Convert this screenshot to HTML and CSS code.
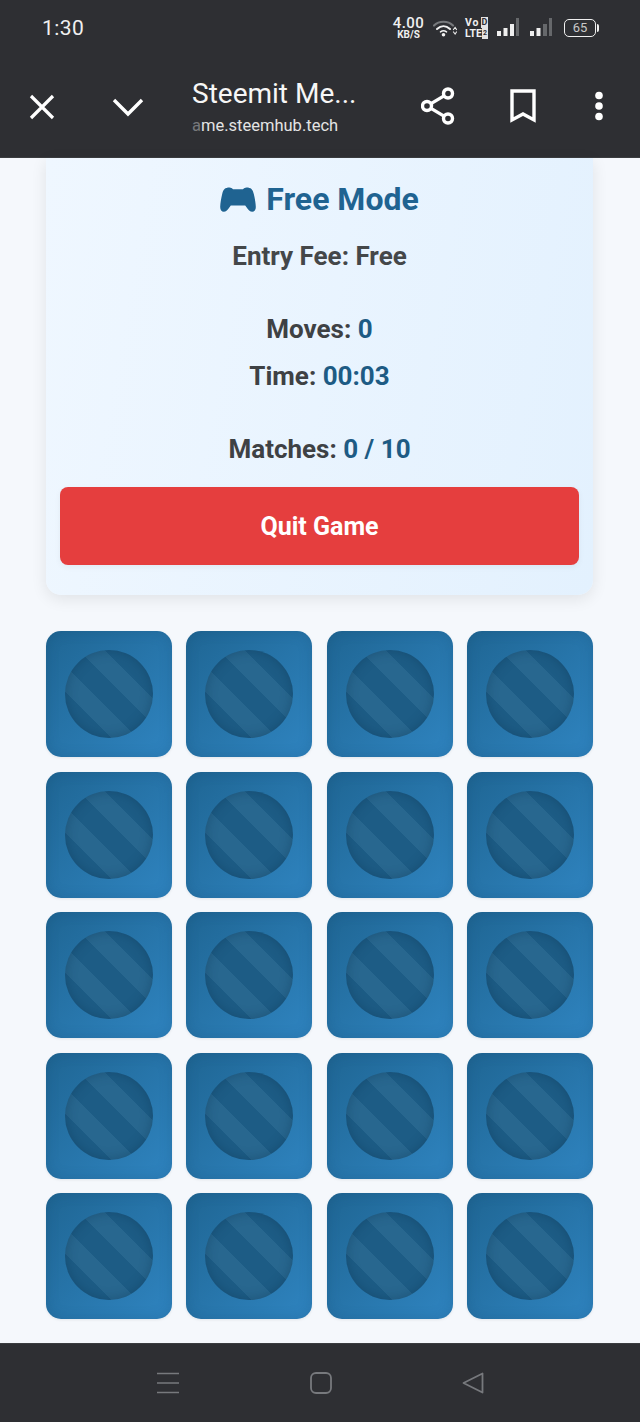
FILE: index.html
```html
<!DOCTYPE html>
<html lang="en">
<head>
<meta charset="utf-8">
<title>Steemit Memory Game</title>
<link rel="stylesheet" href="styles.css">
</head>
<body>
<div class="phone">
  <header class="chrome">
    <div class="status">
      <span class="clock">1:30</span>
      <div class="status-icons">
        <div class="speed"><span class="speed-num">4.00</span><span class="speed-unit">KB/S</span></div>
        <svg class="wifi" width="24" height="17" viewBox="0 0 24 17" fill="none" stroke-linecap="round">
          <path d="M1 5.500C6 0.500 15 0.500 20 5.500" stroke="#77797c" stroke-width="2.200"/>
          <path d="M4 9C8 5.400 13 5.400 17 9" stroke="#f2f2f2" stroke-width="2"/>
          <path d="M7.500 11.800C9.200 10.600 11.800 10.600 13.500 11.800" stroke="#f2f2f2" stroke-width="1.600"/>
          <circle cx="10.500" cy="14.800" r="1.800" fill="#f2f2f2"/>
          <path d="M20.500 9.500l1.600-2 1.400 2M20.500 12l1.600 2 1.400-2" stroke="#e8e8e8" stroke-width="1.200"/>
        </svg>
        <div class="volte">
          <div class="volte-row"><span class="vo">Vo</span><span class="sim-d">D</span></div>
          <div class="volte-row"><span>LTE</span><span class="sim">2</span></div>
        </div>
        <svg class="signal" width="22" height="20" viewBox="0 0 22 20">
          <rect x="0" y="13" width="4" height="5" fill="#efefef"/><rect x="6.500" y="10" width="4" height="8" fill="#efefef"/><rect x="13" y="6" width="4" height="12" fill="#efefef"/><rect x="19" y="0" width="3" height="18" fill="#66686b"/>
        </svg>
        <svg class="signal signal-last" width="22" height="20" viewBox="0 0 22 20">
          <rect x="0" y="13" width="4" height="5" fill="#efefef"/><rect x="6.500" y="10" width="4" height="8" fill="#efefef"/><rect x="13" y="6" width="4" height="12" fill="#66686b"/><rect x="19" y="0" width="3" height="18" fill="#66686b"/>
        </svg>
        <div class="battery"><span class="battery-body">65</span><span class="battery-cap"></span></div>
      </div>
    </div>
    <div class="toolbar">
      <svg class="ico-close" width="26" height="26" viewBox="0 0 26 26" fill="none" stroke="#fff" stroke-width="3.200"><path d="M2 2L24 24M24 2L2 24"/></svg>
      <svg class="ico-chevron" width="32" height="20" viewBox="0 0 32 20" fill="none" stroke="#fff" stroke-width="3.400"><path d="M2 3L16 17L30 3"/></svg>
      <div class="title-block">
        <div class="page-title">Steemit Me...</div>
        <div class="page-url"><span class="url-fade">a</span>me.steemhub.tech</div>
      </div>
      <svg class="ico-share" width="34" height="38" viewBox="0 0 34 38" fill="none" stroke="#fff" stroke-width="3.400"><circle cx="27" cy="6.500" r="4.500"/><circle cx="6" cy="19" r="4.500"/><circle cx="27" cy="31.500" r="4.500"/><path d="M10 16.600L23 8.900M10 21.400L23 29.100"/></svg>
      <svg class="ico-bookmark" width="26" height="34" viewBox="0 0 26 34" fill="none" stroke="#fff" stroke-width="3.400"><path d="M2 2H24V31L13 25L2 31Z"/></svg>
      <svg class="ico-more" width="10" height="30" viewBox="0 0 10 30" fill="#fff"><circle cx="5" cy="4.500" r="3.800"/><circle cx="5" cy="15" r="3.800"/><circle cx="5" cy="25.500" r="3.800"/></svg>
    </div>
  </header>

  <main class="page">
    <section class="panel">
      <h1 class="mode">
        <svg class="pad" width="36" height="25" viewBox="0 0 36 25"><path fill="#1f6391" d="M9.500 0.500C11 0.500 12 1.400 13 2.200H23C24 1.400 25 0.500 26.500 0.500C31 0.500 32.800 2.500 33.800 7C34.800 11.500 35.800 16 35.800 20C35.800 23 34.400 24.700 32.200 24.700C30 24.700 28.800 23.500 27.400 21.500L25.200 18.500H10.800L8.600 21.500C7.200 23.500 6 24.700 3.800 24.700C1.600 24.700 0.200 23 0.200 20C0.200 16 1.200 11.500 2.200 7C3.200 2.500 5 0.500 9.500 0.500Z"/></svg>
        <span>Free Mode</span>
      </h1>
      <p class="fee">Entry Fee: Free</p>
      <p class="stat stat-moves">Moves: <b>0</b></p>
      <p class="stat stat-time">Time: <b>00:03</b></p>
      <p class="stat stat-matches">Matches: <b>0 / 10</b></p>
      <button class="quit">Quit Game</button>
    </section>

    <section class="board">
      <div class="tile"><div class="disc"></div></div><div class="tile"><div class="disc"></div></div><div class="tile"><div class="disc"></div></div><div class="tile"><div class="disc"></div></div>
      <div class="tile"><div class="disc"></div></div><div class="tile"><div class="disc"></div></div><div class="tile"><div class="disc"></div></div><div class="tile"><div class="disc"></div></div>
      <div class="tile"><div class="disc"></div></div><div class="tile"><div class="disc"></div></div><div class="tile"><div class="disc"></div></div><div class="tile"><div class="disc"></div></div>
      <div class="tile"><div class="disc"></div></div><div class="tile"><div class="disc"></div></div><div class="tile"><div class="disc"></div></div><div class="tile"><div class="disc"></div></div>
      <div class="tile"><div class="disc"></div></div><div class="tile"><div class="disc"></div></div><div class="tile"><div class="disc"></div></div><div class="tile"><div class="disc"></div></div>
    </section>
  </main>

  <footer class="navbar">
    <svg width="24" height="22" viewBox="0 0 24 22" stroke="#77797d" stroke-width="1.600" fill="none"><path d="M1 1.500H23M1 11H23M1 20.500H23"/></svg>
    <svg width="22" height="22" viewBox="0 0 22 22" stroke="#77797d" stroke-width="1.800" fill="none"><rect x="1" y="1" width="20" height="20" rx="5"/></svg>
    <svg width="22" height="22" viewBox="0 0 22 22" stroke="#77797d" stroke-width="1.800" fill="none" stroke-linejoin="round"><path d="M20.500 1.500V20.500L1.500 11Z"/></svg>
  </footer>
</div>
</body>
</html>
```
FILE: styles.css
```css
* { box-sizing: border-box; }
html, body { margin: 0; padding: 0; }
body { font-family: Roboto, "Liberation Sans", sans-serif; background: #f5f8fc; }
.phone { width: 640px; height: 1422px; display: flex; flex-direction: column; overflow: hidden; }

.chrome { height: 158px; background: #2e2f33; color: #fff; flex: none; border-bottom: 1px solid #3b3d40; }
.status { height: 56px; display: flex; align-items: center; justify-content: space-between; padding: 0 41px 0 42px; }
.clock { font-size: 21px; color: #f0f0f0; letter-spacing: 0.4px; }
.status-icons { display: flex; align-items: center; }
.speed { display: flex; flex-direction: column; align-items: center; width: 31px; margin-right: 9px; color: #f0f0f0; font-weight: 500; }
.speed-num { font-size: 15px; line-height: 14px; letter-spacing: 0.4px; }
.speed-unit { font-size: 10px; line-height: 10px; font-weight: 700; }
.wifi { margin-right: 8px; }
.volte { width: 23px; margin-right: 9px; font-size: 10.500px; line-height: 11px; font-weight: 700; color: #f0f0f0; }
.volte-row { display: flex; justify-content: space-between; white-space: nowrap; }
.vo { letter-spacing: 0.8px; }
.sim, .sim-d { background: #e4e4e4; color: #2e2f33; width: 7px; text-align: center; overflow: hidden; }
.sim { font-size: 7px; }
.sim-d { font-size: 9px; }
.signal { margin-right: 11px; }
.signal-last { margin-right: 12px; }
.battery { display: flex; align-items: center; }
.battery-body { width: 32px; height: 18px; border: 1.500px solid #efefef; border-radius: 5px; font-size: 13px; line-height: 15px; text-align: center; color: #c9c9c9; }
.battery-cap { width: 2px; height: 8px; background: #efefef; margin-left: 1px; border-radius: 0 2px 2px 0; }

.toolbar { height: 101px; display: flex; align-items: flex-start; padding: 0 0 0 29px; }
.ico-close { margin-top: 38px; flex: none; }
.ico-chevron { margin: 41px 0 0 57px; flex: none; }
.title-block { width: 210px; margin-left: 48px; margin-top: 21px; flex: none; }
.page-title { font-size: 28px; line-height: 34px; color: #f6f6f6; white-space: nowrap; }
.page-url { font-size: 16.500px; line-height: 20px; margin-top: 5px; color: #e4e4e4; white-space: nowrap; }
.url-fade { color: #77797c; }
.ico-share { margin: 31px 0 0 19px; flex: none; }
.ico-bookmark { margin: 33px 0 0 55px; flex: none; }
.ico-more { margin: 35px 0 0 58px; flex: none; }

.page { flex: 1; padding: 0 47px 0 46px; }
.panel { height: 437px; padding: 0 14px; background: linear-gradient(100deg, #eff7ff 0%, #e3f1fe 100%); border-radius: 0 0 15px 15px; box-shadow: 0 4px 16px rgba(0,0,0,0.09); display: flex; flex-direction: column; align-items: center; }
.mode { margin: 22px 0 0; display: flex; align-items: center; gap: 10px; font-size: 32px; line-height: 38px; font-weight: 700; color: #1f6391; white-space: nowrap; }
.fee { margin: 23px 0 0; font-size: 26px; line-height: 30px; font-weight: 700; color: #444749; }
.stat { margin: 0; font-size: 26px; line-height: 30px; font-weight: 700; color: #3e4144; }
.stat b { color: #1d5b84; font-weight: 700; }
.stat-moves { margin-top: 43px; }
.stat-time { margin-top: 17px; }
.stat-matches { margin-top: 43px; }
.quit { margin-top: 23px; width: 100%; height: 78px; flex: none; border: 0; border-radius: 8px; background: #e53e3e; color: #fff; font-family: inherit; font-size: 25px; font-weight: 700; box-shadow: 0 2px 6px rgba(0,0,0,0.05); }

.board { display: grid; grid-template-columns: repeat(4, 126px); grid-auto-rows: 126px; column-gap: 14.330px; row-gap: 14.500px; margin-top: 36px; }
.tile { border-radius: 15px; background: linear-gradient(135deg, #1f6694, #2f84c0); box-shadow: inset 0 0 14px rgba(15,60,95,0.2), 0 1px 3px rgba(0,0,0,0.08); display: flex; align-items: center; justify-content: center; }
.disc { width: 88px; height: 88px; border-radius: 50%; background: repeating-linear-gradient(45deg, #1d5c85 12px, #1d5c85 33px, #28678f 33px, #28678f 51px); box-shadow: inset 0 0 12px rgba(10,45,75,0.35); }

.navbar { height: 79px; flex: none; background: #2e2f33; border-top: 1px solid #3b3d40; display: flex; align-items: center; padding: 0 156px; justify-content: space-between; }
```
